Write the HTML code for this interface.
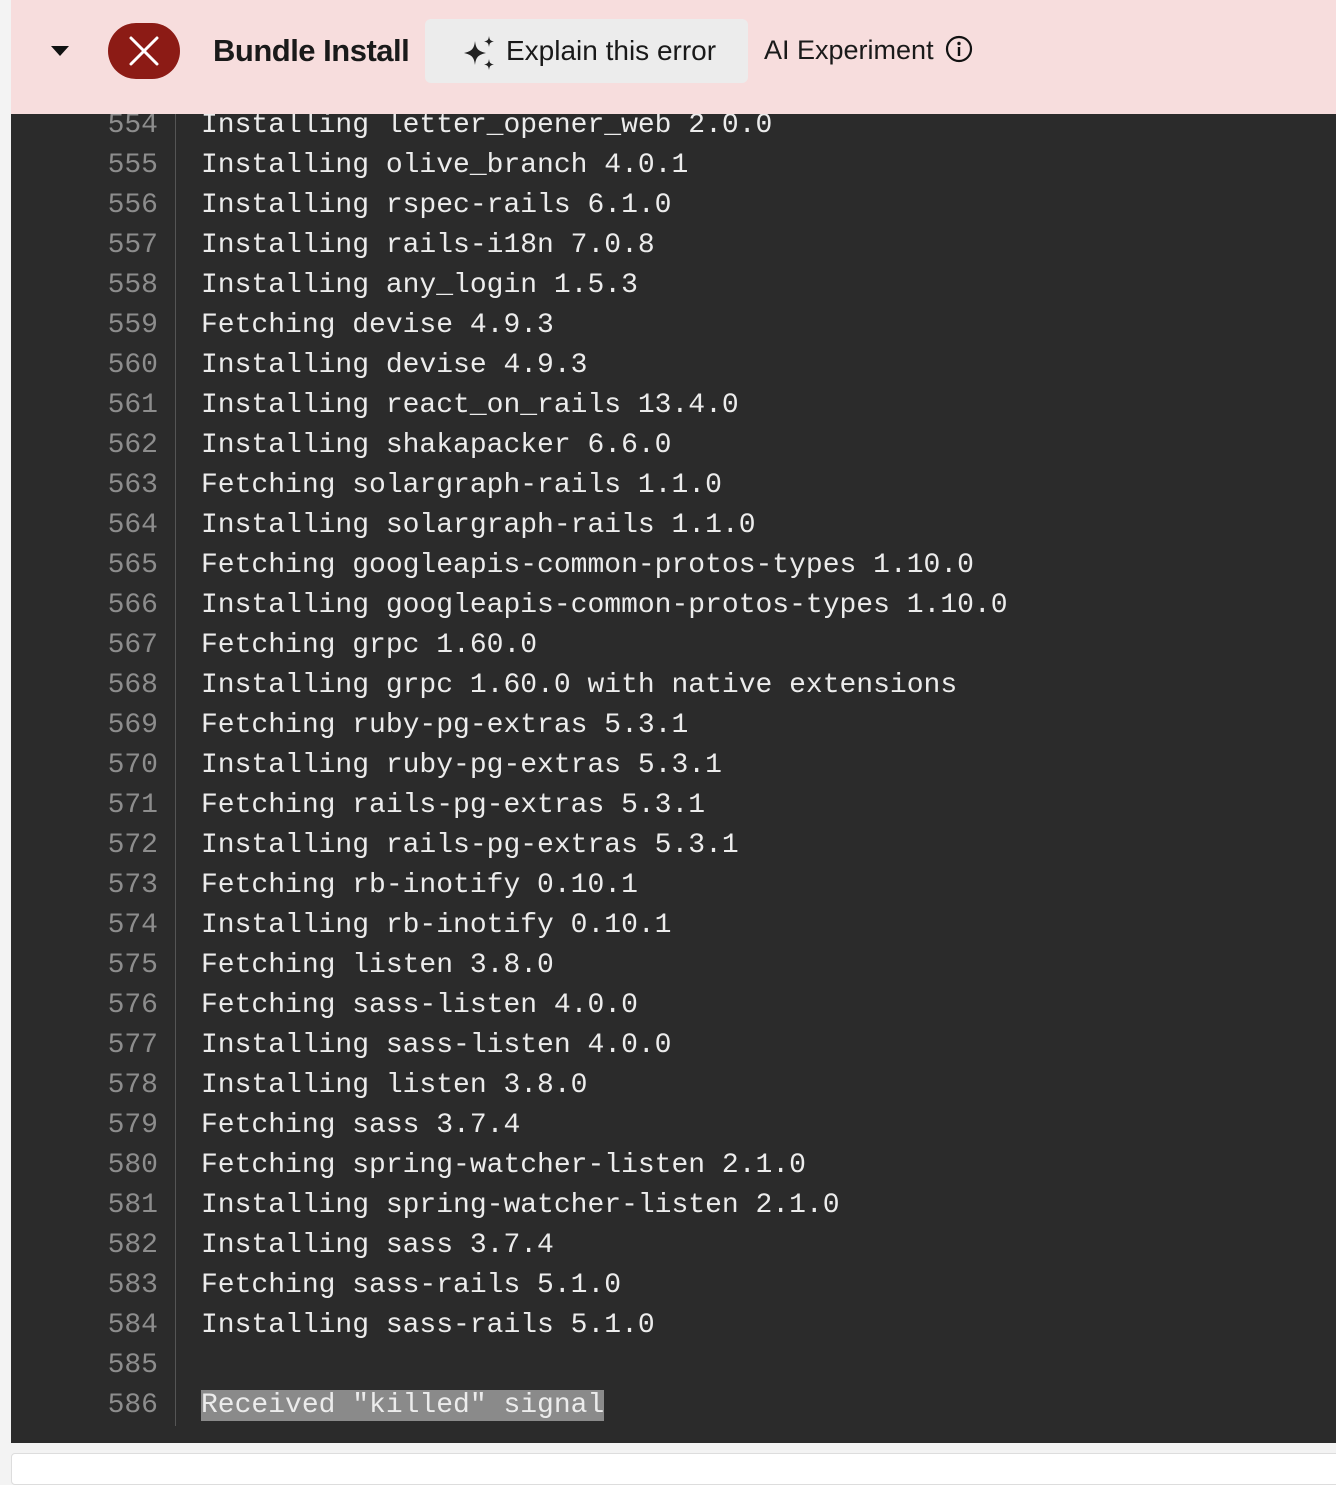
<!DOCTYPE html>
<html><head><meta charset="utf-8"><style>
body{margin:0;width:1336px;height:1466px;background:#f3f3f3;overflow:hidden;font-family:"Liberation Sans",sans-serif;position:relative}
.hdr{position:absolute;left:11px;top:0;width:1325px;height:114px;background:#f7dddd}
.tri{position:absolute;left:40px;top:46px;width:0;height:0;border-left:9px solid transparent;border-right:9px solid transparent;border-top:10px solid #111}
.x{position:absolute;left:97px;top:23px;width:72px;height:56px;border-radius:28px;background:#8c1b15}
.title{position:absolute;left:202px;top:33px;font-size:31px;font-weight:bold;color:#1a1a1a;letter-spacing:-0.5px}
.btn{position:absolute;left:414px;top:19px;width:323px;height:64px;background:#ececec;border-radius:6px}
.btn span{position:absolute;left:81px;top:16px;font-size:28px;color:#1a1a1a}
.ai{position:absolute;left:753px;top:35px;font-size:27px;color:#1a1a1a}
.log{position:absolute;left:11px;top:114px;width:1325px;height:1329px;background:#2b2b2b;overflow:hidden}
.sep{position:absolute;left:164px;top:0;width:1px;height:1312px;background:#555}
.ln{position:absolute;left:0;width:147px;text-align:right;color:#8d8d8d;font:28px/40px "Liberation Mono",monospace}
.tx{position:absolute;left:190px;color:#ececec;font:28px/40px "Liberation Mono",monospace;white-space:pre}
.hl{background:#8a8a8a}
.card{position:absolute;left:11px;top:1453px;width:1330px;height:30px;background:#fff;border:1px solid #ddd;border-radius:4px}
</style></head><body>
<div class="hdr">
<div class="tri"></div>
<div class="x"><svg width="72" height="56"><path d="M23 15L49 41M49 15L23 41" stroke="#fff" stroke-width="3" stroke-linecap="round"/></svg></div>
<div class="title">Bundle Install</div>
<div class="btn"><svg style="position:absolute;left:36px;top:16px" width="40" height="36" viewBox="0 0 40 36"><path d="M14 6C15 14 17 16 25 18C17 20 15 22 14 30C13 22 11 20 3 18C11 16 13 14 14 6Z" fill="#222"/><path d="M28 1C28.6 5 29.4 5.8 33 6.5C29.4 7.2 28.6 8 28 12C27.4 8 26.6 7.2 23 6.5C26.6 5.8 27.4 5 28 1Z" fill="#222"/><path d="M28 24C28.6 28 29.4 28.8 33 29.5C29.4 30.2 28.6 31 28 35C27.4 31 26.6 30.2 23 29.5C26.6 28.8 27.4 28 28 24Z" fill="#222"/></svg><span>Explain this error</span></div>
<div class="ai">AI Experiment <svg style="vertical-align:-4px;margin-left:4px" width="28" height="28" viewBox="0 0 28 28"><circle cx="14" cy="14" r="12" fill="none" stroke="#111" stroke-width="2.2"/><circle cx="14" cy="8.5" r="1.7" fill="#111"/><rect x="12.8" y="12" width="2.4" height="9" fill="#111"/></svg></div>
</div>
<div class="log">
<div class="sep"></div>
<div class="ln" style="top:-8px">554<br>555<br>556<br>557<br>558<br>559<br>560<br>561<br>562<br>563<br>564<br>565<br>566<br>567<br>568<br>569<br>570<br>571<br>572<br>573<br>574<br>575<br>576<br>577<br>578<br>579<br>580<br>581<br>582<br>583<br>584<br>585<br>586</div>
<div class="tx" style="top:-8px">Installing letter_opener_web 2.0.0
Installing olive_branch 4.0.1
Installing rspec-rails 6.1.0
Installing rails-i18n 7.0.8
Installing any_login 1.5.3
Fetching devise 4.9.3
Installing devise 4.9.3
Installing react_on_rails 13.4.0
Installing shakapacker 6.6.0
Fetching solargraph-rails 1.1.0
Installing solargraph-rails 1.1.0
Fetching googleapis-common-protos-types 1.10.0
Installing googleapis-common-protos-types 1.10.0
Fetching grpc 1.60.0
Installing grpc 1.60.0 with native extensions
Fetching ruby-pg-extras 5.3.1
Installing ruby-pg-extras 5.3.1
Fetching rails-pg-extras 5.3.1
Installing rails-pg-extras 5.3.1
Fetching rb-inotify 0.10.1
Installing rb-inotify 0.10.1
Fetching listen 3.8.0
Fetching sass-listen 4.0.0
Installing sass-listen 4.0.0
Installing listen 3.8.0
Fetching sass 3.7.4
Fetching spring-watcher-listen 2.1.0
Installing spring-watcher-listen 2.1.0
Installing sass 3.7.4
Fetching sass-rails 5.1.0
Installing sass-rails 5.1.0

<span class="hl">Received "killed" signal</span></div>
</div>
<div class="card"></div>
</body></html>
